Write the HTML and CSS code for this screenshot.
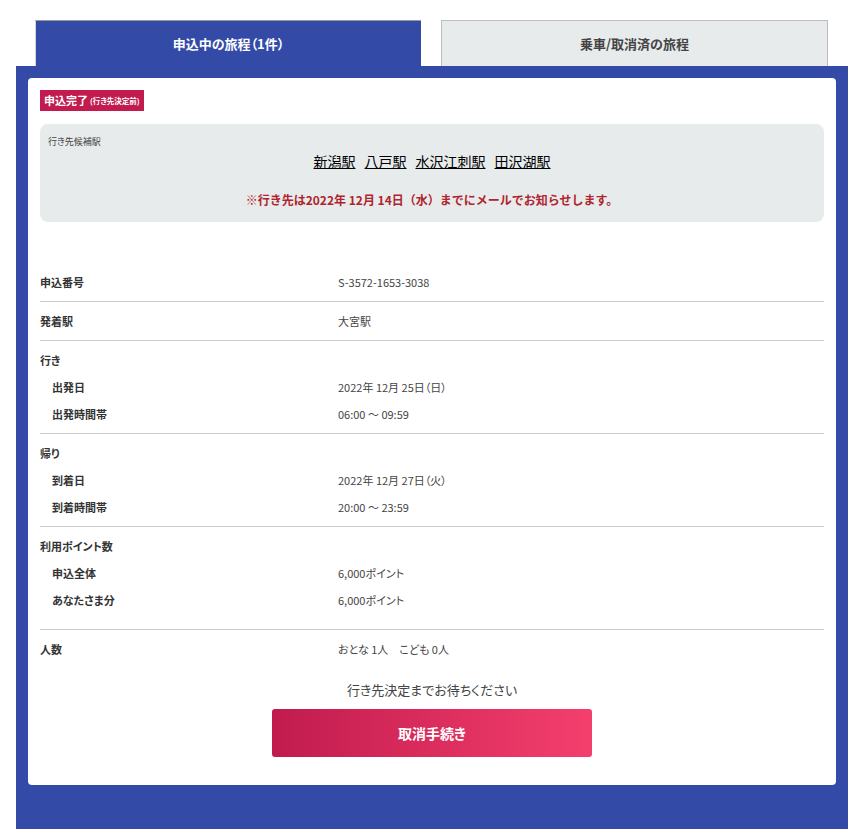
FILE: index.html
```html
<!DOCTYPE html>
<html lang="ja">
<head>
<meta charset="utf-8">
<title>旅程</title>
<link rel="stylesheet" href="styles.css">
</head>
<body>
<div class="page">
  <div class="tabs">
    <div class="tab tab-active">申込中の旅程（1件）</div>
    <div class="tab tab-inactive">乗車/取消済の旅程</div>
  </div>
  <div class="panel">
    <div class="card">
      <div class="badge"><span class="badge-main">申込完了</span><span class="badge-sub">(行き先決定前)</span></div>
      <div class="candidates">
        <div class="cand-label">行き先候補駅</div>
        <div class="stations">
          <a class="station">新潟駅</a>
          <a class="station">八戸駅</a>
          <a class="station">水沢江刺駅</a>
          <a class="station">田沢湖駅</a>
        </div>
        <div class="notice">※行き先は2022年 12月 14日（水）までにメールでお知らせします。</div>
      </div>

      <div class="details">
        <div class="group">
          <div class="row"><div class="label">申込番号</div><div class="value">S-3572-1653-3038</div></div>
        </div>
        <div class="group">
          <div class="row"><div class="label">発着駅</div><div class="value">大宮駅</div></div>
        </div>
        <div class="group">
          <div class="row"><div class="label">行き</div></div>
          <div class="row"><div class="label sub">出発日</div><div class="value">2022年 12月 25日（日）</div></div>
          <div class="row"><div class="label sub">出発時間帯</div><div class="value">06:00 ～ 09:59</div></div>
        </div>
        <div class="group">
          <div class="row"><div class="label">帰り</div></div>
          <div class="row"><div class="label sub">到着日</div><div class="value">2022年 12月 27日（火）</div></div>
          <div class="row"><div class="label sub">到着時間帯</div><div class="value">20:00 ～ 23:59</div></div>
        </div>
        <div class="group group-extra">
          <div class="row"><div class="label">利用ポイント数</div></div>
          <div class="row"><div class="label sub">申込全体</div><div class="value">6,000ポイント</div></div>
          <div class="row"><div class="label sub">あなたさま分</div><div class="value">6,000ポイント</div></div>
        </div>
        <div class="group group-last">
          <div class="row"><div class="label">人数</div><div class="value">おとな 1人　こども 0人</div></div>
        </div>
      </div>

      <div class="wait">行き先決定までお待ちください</div>
      <div class="actions">
        <button class="cancel-btn" type="button">取消手続き</button>
      </div>
    </div>
  </div>
</div>
</body>
</html>
```

FILE: styles.css
```css
* {
  box-sizing: border-box;
}

html, body {
  margin: 0;
  padding: 0;
  background: #ffffff;
}

body {
  font-family: "Noto Sans CJK JP", "Noto Sans", sans-serif;
  font-feature-settings: "palt";
  color: #333333;
}

.page {
  width: 832px;
  margin-left: 16px;
  padding-top: 20px;
}

.tabs {
  display: grid;
  grid-template-columns: 386px 387px;
  column-gap: 20px;
  padding-left: 19px;
}

.tab {
  height: 46px;
  display: flex;
  align-items: center;
  justify-content: center;
  font-size: 13px;
  font-weight: 700;
  line-height: 1;
}

.tab-active {
  background: #334ba6;
  color: #ffffff;
  border-top: 1px solid #9a9a9a;
  border-left: 1px solid #d6d6d6;
}

.tab-inactive {
  background: #e8ebec;
  color: #444444;
  border: 1px solid #bdbdbd;
  border-bottom: none;
}

.panel {
  background: #334ba6;
  padding: 12px 12px 44px 12px;
}

.card {
  background: #ffffff;
  border-radius: 4px;
  padding: 12px 12px 28px 12px;
}

.badge {
  display: flex;
  align-items: center;
  height: 21px;
  width: 104px;
  padding-left: 4px;
  background: #c21b4f;
  color: #ffffff;
  font-weight: 700;
  white-space: nowrap;
  line-height: 1;
}

.badge-main {
  font-size: 11px;
}

.badge-sub {
  font-size: 7.5px;
  margin-left: 2px;
}

.candidates {
  margin-top: 13px;
  background: #e8ebec;
  border-radius: 8px;
  padding: 12px 8px 13px 8px;
}

.cand-label {
  font-size: 9px;
  line-height: 12px;
  color: #444444;
}

.stations {
  margin-top: 3px;
  display: flex;
  justify-content: center;
  gap: 9px;
  line-height: 20px;
}

.station {
  font-size: 14px;
  color: #000000;
  text-decoration: underline;
  cursor: pointer;
}

.notice {
  margin-top: 20px;
  text-align: center;
  font-size: 12px;
  line-height: 18px;
  font-weight: 700;
  font-feature-settings: normal;
  color: #b0242d;
}

.details {
  margin-top: 41px;
}

.group {
  padding: 10px 0;
  border-bottom: 1px solid #cccccc;
  display: flex;
  flex-direction: column;
  gap: 9px;
}

.group-extra {
  padding-bottom: 20px;
}

.group-last {
  border-bottom: none;
}

.row {
  display: grid;
  grid-template-columns: 298px 1fr;
  line-height: 18px;
  font-size: 11px;
}

.label {
  font-weight: 700;
  color: #333333;
}

.label.sub {
  padding-left: 12px;
}

.value {
  color: #444444;
}

.wait {
  margin-top: 13px;
  text-align: center;
  font-size: 13px;
  line-height: 18px;
  color: #444444;
}

.actions {
  margin-top: 10px;
  display: flex;
  justify-content: center;
}

.cancel-btn {
  width: 320px;
  height: 48px;
  border: none;
  border-radius: 3px;
  background: linear-gradient(90deg, #c11b4e 0%, #f43f6d 100%);
  color: #ffffff;
  font-family: "Noto Sans CJK JP", "Noto Sans", sans-serif;
  font-feature-settings: "palt";
  font-size: 14px;
  font-weight: 700;
  cursor: pointer;
}
```
